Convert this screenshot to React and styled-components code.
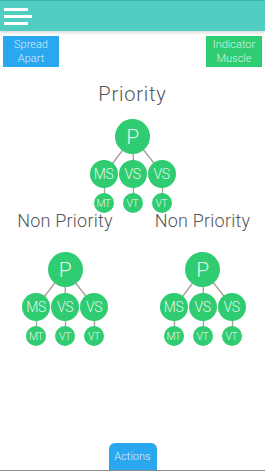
import React from 'react';
import styled, { createGlobalStyle } from 'styled-components';

const colors = {
  teal: '#52cdc1',
  blue: '#2aa8ef',
  green: '#2fcc72',
  line: '#a8a29c',
  title: '#555555',
};

const GlobalStyle = createGlobalStyle`
  html, body {
    margin: 0;
    padding: 0;
    background: #ffffff;
    font-family: Roboto, 'Liberation Sans', sans-serif;
  }
`;

const Page = styled.div`
  display: flex;
  flex-direction: column;
  min-height: 100vh;
  overflow: hidden;
`;

const Header = styled.div`
  height: 31px;
  background-color: ${colors.teal};
  border-top: 1px solid #3fb3a8;
  box-sizing: border-box;
  box-shadow: 0 2px 3px rgba(0, 0, 0, 0.15);
  display: flex;
  align-items: center;
  padding-left: 4px;
`;

const Burger = styled.div`
  display: flex;
  flex-direction: column;
  gap: 4px;

  span {
    display: block;
    height: 3px;
    width: 24px;
    background: #ffffff;
  }
  span:nth-child(2) {
    width: 28px;
  }
`;

const ButtonRow = styled.div`
  display: flex;
  justify-content: space-between;
  padding: 5px 3px 0 3px;
`;

const SquareButton = styled.div`
  width: 56px;
  height: 31px;
  background-color: ${props => props.color};
  color: rgba(255, 255, 255, 0.82);
  font-size: 11px;
  font-weight: 300;
  line-height: 14px;
  display: flex;
  align-items: center;
  justify-content: center;
  text-align: center;
`;

const Title = styled.div`
  text-align: center;
  color: ${colors.title};
  font-size: ${props => props.size}px;
  font-weight: 300;
  line-height: ${props => props.lh}px;
  letter-spacing: ${props => props.ls}px;
`;

const PrioritySection = styled.div`
  display: flex;
  flex-direction: column;
  align-items: center;
  margin-top: 15px;
  gap: 13px;
`;

const NonPriorityRow = styled.div`
  display: grid;
  grid-template-columns: 130px 125px;
  column-gap: 10px;
  margin-top: -2px;
`;

const Column = styled.div`
  display: flex;
  flex-direction: column;
  align-items: center;
  gap: 21px;
`;

const TreeBox = styled.div`
  position: relative;
  width: 88px;
  display: flex;
  flex-direction: column;
  align-items: center;
`;

const Lines = styled.svg`
  position: absolute;
  left: 0;
  top: 0;
  width: 88px;
  height: 94px;
  z-index: 0;
`;

const NodeRow = styled.div`
  display: flex;
  justify-content: space-between;
  width: 87px;
  margin-top: ${props => props.gap}px;
  position: relative;
  z-index: 1;
`;

const Node = styled.div`
  width: ${props => props.size}px;
  height: ${props => props.size}px;
  border-radius: 50%;
  background-color: ${colors.green};
  color: rgba(255, 255, 255, 0.88);
  font-size: ${props => props.font}px;
  font-weight: 300;
  display: flex;
  align-items: center;
  justify-content: center;
  position: relative;
  z-index: 1;
  letter-spacing: -0.5px;
`;

const Slot = styled.div`
  width: 29px;
  display: flex;
  justify-content: center;
`;

const Footer = styled.div`
  margin-top: auto;
  display: flex;
  justify-content: center;
  border-bottom: 1px solid #8a8a8a;
`;

const ActionsButton = styled.div`
  width: 48px;
  height: 27px;
  background-color: ${colors.blue};
  border-radius: 6px 6px 0 0;
  color: rgba(255, 255, 255, 0.85);
  font-size: 11px;
  font-weight: 300;
  display: flex;
  align-items: center;
  justify-content: center;
`;

function Tree() {
  const kids = ['MS', 'VS', 'VS'];
  const grand = ['MT', 'VT', 'VT'];
  const xs = [15.5, 44.5, 73.5];
  return (
    <TreeBox>
      <Lines viewBox="0 0 88 94">
        {xs.map((x, i) => (
          <line key={'a' + i} x1="44" y1="17.5" x2={x} y2="55" stroke={colors.line} strokeWidth="1.4" />
        ))}
        {xs.map((x, i) => (
          <line key={'b' + i} x1={x} y1="55" x2={x} y2="84" stroke={colors.line} strokeWidth="1.4" />
        ))}
      </Lines>
      <Node size={35} font={21}>P</Node>
      <NodeRow gap={6}>
        {kids.map((k, i) => (
          <Slot key={i}>
            <Node size={28} font={14}>{k}</Node>
          </Slot>
        ))}
      </NodeRow>
      <NodeRow gap={5}>
        {grand.map((k, i) => (
          <Slot key={i}>
            <Node size={20} font={10.5}>{k}</Node>
          </Slot>
        ))}
      </NodeRow>
    </TreeBox>
  );
}

export default function App() {
  return (
    <Page>
      <GlobalStyle />
      <Header>
        <Burger>
          <span />
          <span />
          <span />
        </Burger>
      </Header>
      <ButtonRow>
        <SquareButton color={colors.blue}>Spread<br />Apart</SquareButton>
        <SquareButton color={colors.green}>Indicator<br />Muscle</SquareButton>
      </ButtonRow>
      <PrioritySection>
        <Title size={20} lh={24} ls={0.8}>Priority</Title>
        <Tree />
      </PrioritySection>
      <NonPriorityRow>
        <Column>
          <Title size={18} lh={20} ls={0.2}>Non Priority</Title>
          <Tree />
        </Column>
        <Column>
          <Title size={18} lh={20} ls={0.2}>Non Priority</Title>
          <Tree />
        </Column>
      </NonPriorityRow>
      <Footer>
        <ActionsButton>Actions</ActionsButton>
      </Footer>
    </Page>
  );
}
